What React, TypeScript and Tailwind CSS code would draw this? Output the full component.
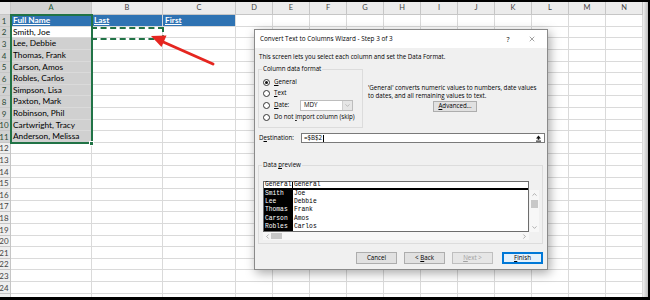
import { X, ChevronDown, ChevronUp, ChevronLeft, ChevronRight } from 'lucide-react';

const names = [
    'Smith, Joe',
    'Lee, Debbie',
    'Thomas, Frank',
    'Carson, Amos',
    'Robles, Carlos',
    'Simpson, Lisa',
    'Paxton, Mark',
    'Robinson, Phil',
    'Cartwright, Tracy',
    'Anderson, Melissa',
];

const cols = [
    { l: 'A', w: 81 },
    { l: 'B', w: 71 },
    { l: 'C', w: 73 },
    ...['D', 'E', 'F', 'G', 'H', 'I', 'J', 'K', 'L', 'M', 'N'].map((l) => ({ l, w: 37 })),
];

const rowHeights = Array.from({ length: 25 }, (_, i) => [12, 11, 12, 12, 11][i % 5]);

const preview = [
    ['Smith', 'Joe'],
    ['Lee', 'Debbie'],
    ['Thomas', 'Frank'],
    ['Carson', 'Amos'],
    ['Robles', 'Carlos'],
];

function Radio({ checked }: { checked?: boolean }) {
    return (
        <span className="w-[7px] h-[7px] rounded-full border border-[#333] bg-white flex items-center justify-center shrink-0">
            {checked && <span className="w-[3px] h-[3px] rounded-full bg-[#111]" />}
        </span>
    );
}

function Btn({ children, disabled, primary }: { children: React.ReactNode; disabled?: boolean; primary?: boolean }) {
    return (
        <div
            className={
                'w-[41px] h-[12px] flex items-center justify-center border ' +
                (primary
                    ? 'border-[#0078d7] bg-[#e5f1fb] shadow-[inset_0_0_0_1px_#0078d7]'
                    : disabled
                      ? 'border-[#bfbfbf] bg-[#e6e6e6] text-[#a0a0a0]'
                      : 'border-[#adadad] bg-[#e1e1e1]')
            }
        >
            <span>{children}</span>
        </div>
    );
}

function Sheet() {
    return (
        <div className="w-[643px] h-[295px] bg-white overflow-hidden flex flex-col font-['Lato'] text-[8.3px] text-black">
            {/* column headers */}
            <div className="flex h-[13px] shrink-0">
                <div className="w-[11px] bg-[#e6e6e6] border-r border-b border-[#c6c6c6]" />
                {cols.map((c) => (
                    <div
                        key={c.l}
                        style={{ width: c.w }}
                        className={
                            'shrink-0 flex items-center justify-center text-[7.5px] border-r border-b border-[#c6c6c6] ' +
                            (c.l === 'A' ? 'bg-[#d2d2d2] text-[#1d5b37]' : 'bg-[#ececec] text-[#444]')
                        }
                    >
                        {c.l}
                    </div>
                ))}
            </div>
            {rowHeights.map((h, r) => {
                const sel = r < 11;
                return (
                    <div key={r} className="flex shrink-0" style={{ height: h }}>
                        <div
                            className={
                                'w-[11px] shrink-0 flex items-center justify-center pr-[2px] overflow-hidden text-[8px] border-r border-b border-[#c6c6c6] ' +
                                (sel ? 'bg-[#d2d2d2] text-[#2a4a35]' : 'bg-[#eeeeee] text-[#444]')
                            }
                        >
                            {r < 24 ? r + 1 : null}
                        </div>
                        {cols.map((c, ci) => {
                            let cls = 'bg-white';
                            let text: React.ReactNode = null;
                            if (r === 0 && ci < 3) {
                                cls = 'bg-[#2f73b3] text-white font-bold underline';
                                text = ['Full Name', 'Last', 'First'][ci];
                            } else if (ci === 0 && r >= 1 && r <= 10) {
                                cls = r === 1 ? 'bg-white' : 'bg-[#d0d0d0]';
                                text = names[r - 1];
                            }
                            return (
                                <div
                                    key={c.l}
                                    style={{ width: c.w }}
                                    className={'shrink-0 flex items-center pl-[2px] whitespace-nowrap border-r border-b border-[#dadada] ' + cls}
                                >
                                    {text}
                                </div>
                            );
                        })}
                    </div>
                );
            })}
        </div>
    );
}

function Dialog() {
    return (
        <div className="absolute left-[254px] top-[29px] w-[294px] h-[241px] border border-[#8a8a8a] bg-[#f0f0f0] shadow-[2px_3px_10px_rgba(0,0,0,0.35)] flex flex-col font-['Open_Sans'] text-[6.2px] text-black leading-none">
            <div className="h-[18px] bg-white flex items-center pl-[5px] pr-[3px] text-[6.4px]">
                <span>Convert Text to Columns Wizard - Step 3 of 3</span>
                <span className="ml-auto w-[24px] text-center text-[7px]">?</span>
                <span className="w-[24px] flex justify-center">
                    <X size={8} strokeWidth={1.1} />
                </span>
            </div>
            <div className="flex flex-col pl-[3px]">
                <div className="mt-[4px] h-[10px] leading-[10px] pl-[1px]">
                    This screen lets you select each column and set the Data Format.
                </div>

                <div className="mt-[3px] flex items-start">
                    <fieldset className="w-[105px] border border-[#dcdcdc] pb-[4px]">
                        <legend className="ml-[3px] px-[1px] h-[8px] leading-[8px]">Column data format</legend>
                        <div className="mt-[4px] flex flex-col pl-[4px]">
                            <div className="h-[11px] flex items-center gap-[4px]">
                                <Radio checked />
                                <span>
                                    <u>G</u>eneral
                                </span>
                            </div>
                            <div className="h-[11px] flex items-center gap-[4px]">
                                <Radio />
                                <span>
                                    <u>T</u>ext
                                </span>
                            </div>
                            <div className="h-[12px] flex items-center gap-[4px]">
                                <Radio />
                                <span className="w-[22px]">
                                    <u>D</u>ate:
                                </span>
                                <div className="w-[53px] h-[11px] flex border border-[#bdbdbd] bg-white">
                                    <span className="flex-1 flex items-center pl-[3px]">MDY</span>
                                    <span className="w-[10px] bg-[#e6e6e6] border-l border-[#cfcfcf] flex items-center justify-center text-[#8a8a8a]">
                                        <ChevronDown size={7} strokeWidth={1.6} />
                                    </span>
                                </div>
                            </div>
                            <div className="h-[12px] flex items-center gap-[4px]">
                                <Radio />
                                <span>
                                    Do not <u>i</u>mport column (skip)
                                </span>
                            </div>
                        </div>
                    </fieldset>
                    <div className="ml-[5px] w-[174px] pt-[19px] flex flex-col items-center">
                        <div className="w-full leading-[8px] whitespace-nowrap">
                            'General' converts numeric values to numbers, date values
                            <br />
                            to dates, and all remaining values to text.
                        </div>
                        <div className="mt-[1px] w-[44px] h-[11px] flex items-center justify-center border border-[#adadad] bg-[#e1e1e1]">
                            <span>
                                <u>A</u>dvanced...
                            </span>
                        </div>
                    </div>
                </div>

                <div className="mt-[5px] h-[10px] flex items-center pr-[2px]">
                    <span className="w-[43px] pl-[1px]">
                        D<u>e</u>stination:
                    </span>
                    <div className="flex-1 h-[10px] flex border border-[#7a7a7a] bg-white">
                        <span className="flex-1 flex items-center pl-[2px]">
                            =$B$2<span className="ml-[1px] w-px h-[7px] bg-black" />
                        </span>
                        <span className="w-[11px] flex items-center justify-center">
                            <svg width="7" height="7" viewBox="0 0 7 7">
                                <path d="M3.5 0.5 L6 3.4 H4.3 V4.8 H2.7 V3.4 H1 Z" fill="#111" />
                                <rect x="1" y="5.6" width="5" height="1" fill="#111" />
                            </svg>
                        </span>
                    </div>
                </div>

                <fieldset className="mt-[18px] w-[285px] border border-[#dcdcdc] pb-[3px]">
                    <legend className="ml-[3px] px-[1px] h-[8px] leading-[8px]">
                        Data <u>p</u>review
                    </legend>
                    <div className="pt-[12px] pl-[4px]">
                        <div className="w-[276px] h-[59px] flex flex-col">
                            <div className="flex">
                                <div className="w-[266px] h-[51px] border border-[#6d6d6d] bg-white flex flex-col font-['Liberation_Mono'] text-[6.3px]">
                                    <div className="h-[8px] flex border-b-2 border-black">
                                        <span className="w-[29px] flex items-center pl-[1px] border-r border-black">General</span>
                                        <span className="flex items-center pl-[1px]">General</span>
                                    </div>
                                    <div className="flex-1 flex">
                                        <div className="w-[29px] bg-black text-white flex flex-col pl-[1px]">
                                            {preview.map((p) => (
                                                <span key={p[0]} className="h-[8.2px] leading-[8.2px]">
                                                    {p[0]}
                                                </span>
                                            ))}
                                        </div>
                                        <div className="flex flex-col pl-[1px]">
                                            {preview.map((p) => (
                                                <span key={p[1]} className="h-[8.2px] leading-[8.2px]">
                                                    {p[1]}
                                                </span>
                                            ))}
                                        </div>
                                    </div>
                                </div>
                                <div className="ml-px w-[9px] mt-[9px] h-[42px] bg-[#f7f7f7] flex flex-col items-center text-[#606060]">
                                    <ChevronUp size={7} strokeWidth={1.6} className="mt-[1px]" />
                                    <div className="mt-[2px] w-[7px] h-[8px] bg-[#c8c8c8]" />
                                    <ChevronDown size={7} strokeWidth={1.6} className="mt-auto mb-[1px]" />
                                </div>
                            </div>
                            <div className="w-[266px] h-[8px] bg-[#f7f7f7] flex items-center text-[#606060]">
                                <ChevronLeft size={7} strokeWidth={1.6} className="ml-[1px]" />
                                <div className="w-[11px] h-[6px] bg-[#c8c8c8]" />
                                <ChevronRight size={7} strokeWidth={1.6} className="ml-auto mr-px" />
                            </div>
                        </div>
                    </div>
                </fieldset>

                <div className="mt-[8px] flex justify-end gap-[7px] pr-[4px]">
                    <Btn>Cancel</Btn>
                    <Btn>
                        &lt; <u>B</u>ack
                    </Btn>
                    <Btn disabled>
                        <u>N</u>ext &gt;
                    </Btn>
                    <div className="ml-[2px]">
                        <Btn primary>
                            <u>F</u>inish
                        </Btn>
                    </div>
                </div>
            </div>
        </div>
    );
}

export default function App() {
    return (
        <div className="relative w-[650px] h-[300px] bg-black overflow-hidden flex flex-col">
            <div className="h-[2px] shrink-0" />
            <div className="flex">
                <Sheet />
                <div className="w-[5px] h-[295px] bg-gradient-to-r from-[#f0f0f0] to-[#bdbdbd]" />
            </div>

            {/* selection A1:A11 */}
            <div className="absolute left-[10px] top-[14px] w-[83px] h-[130px] border-2 border-[#217346]" />
            <div className="absolute left-[89px] top-[141px] w-[5px] h-[5px] bg-[#217346] border border-white" />
            {/* copy marquee on B2 */}
            <div className="absolute left-[91px] top-[27px] w-[73px] h-[13px] border-2 border-dashed border-[#217346]" />

            {/* red arrow */}
            <svg className="absolute inset-0 pointer-events-none" width="650" height="300" viewBox="0 0 650 300">
                <line x1="213" y1="64" x2="161" y2="41" stroke="#e52620" strokeWidth="3" strokeLinecap="round" />
                <polygon points="151,36 166.5,35.5 161.5,47" fill="#e52620" />
            </svg>

            <Dialog />
        </div>
    );
}
